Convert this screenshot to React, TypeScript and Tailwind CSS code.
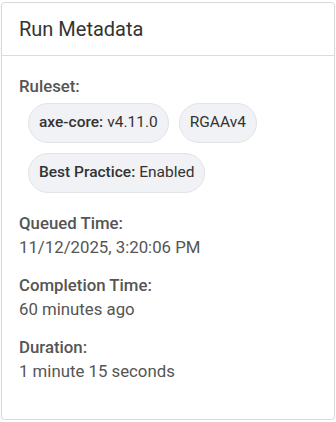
const chips = [
  [
    { label: 'axe-core:', value: 'v4.11.0' },
    { label: '', value: 'RGAAv4' },
  ],
  [{ label: 'Best Practice:', value: 'Enabled' }],
]

const fields = [
  { label: 'Queued Time:', value: '11/12/2025, 3:20:06 PM' },
  { label: 'Completion Time:', value: '60 minutes ago' },
  { label: 'Duration:', value: '1 minute 15 seconds' },
]

export default function App() {
  return (
    <div className="px-[1px] pt-[2px] font-['Roboto',sans-serif]">
      <div className="flex h-[418px] flex-col rounded-[4px] border border-[#d9d9d9] bg-white shadow-[0_1px_2px_rgba(0,0,0,0.08)]">
        <div className="flex h-[53px] items-center border-b border-[#dcdcdc] px-[17px]">
          <h2 className="text-[20px] font-normal text-[#333]">Run Metadata</h2>
        </div>
        <div className="px-[17px] pt-[18px]">
          <div className="text-[16.8px] font-medium leading-[24px] text-[#555]">Ruleset:</div>
          <div className="mt-[5px] flex flex-col gap-[10px] pl-[9px]">
            {chips.map((row, i) => (
              <div key={i} className="flex gap-[10px]">
                {row.map((c) => (
                  <span
                    key={c.value}
                    className="flex h-[40px] items-center rounded-full border border-[#e2e3e7] bg-[#f1f2f5] px-[10px] text-[15.5px] text-[#333]"
                  >
                    {c.label ? <span className="mr-[4px] font-medium">{c.label}</span> : null}
                    {c.value}
                  </span>
                ))}
              </div>
            ))}
          </div>
          <div className="mt-[18px] flex flex-col gap-[14px]">
            {fields.map((f) => (
              <div key={f.label}>
                <div className="text-[16.8px] font-medium leading-[24px] text-[#555]">{f.label}</div>
                <div className="text-[16.8px] leading-[24px] text-[#555]">{f.value}</div>
              </div>
            ))}
          </div>
        </div>
      </div>
    </div>
  )
}
